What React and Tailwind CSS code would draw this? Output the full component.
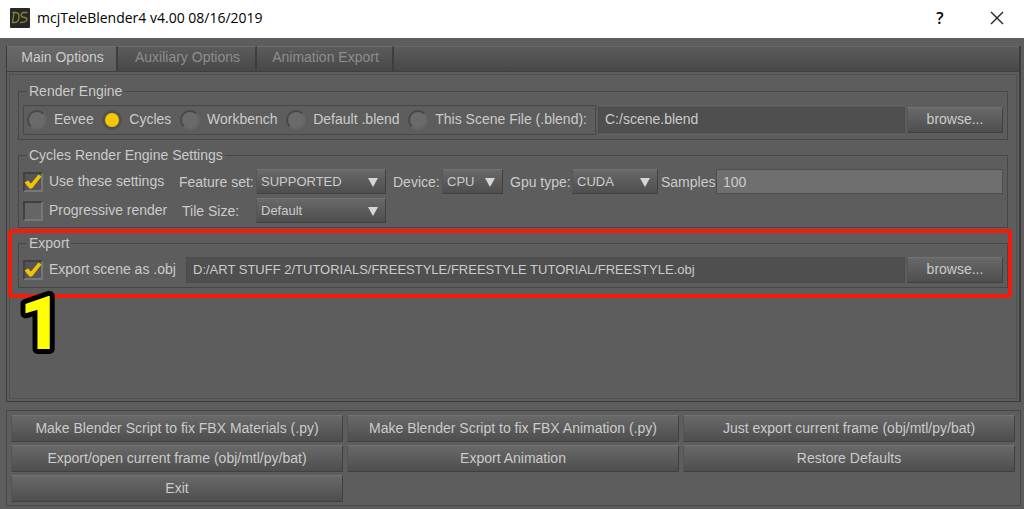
import { useState } from "react";

const tabs = [
  { name: "Main Options", width: "w-[111px]" },
  { name: "Auxiliary Options", width: "w-[139px]" },
  { name: "Animation Export", width: "w-[137px]" },
];

const engines = ["Eevee", "Cycles", "Workbench", "Default .blend", "This Scene File (.blend):"];

const actions = [
  "Make Blender Script to fix FBX Materials (.py)",
  "Make Blender Script to fix FBX Animation (.py)",
  "Just export current frame (obj/mtl/py/bat)",
  "Export/open current frame (obj/mtl/py/bat)",
  "Export Animation",
  "Restore Defaults",
  "Exit",
];

const raised =
  "border border-t-[#727272] border-l-[#555555] border-r-[#414141] border-b-[#414141] bg-linear-to-b from-[#696969] to-[#4e4e4e]";

function Group({ title, children }) {
  return (
    <fieldset className="min-w-0 border border-[#474747] px-1 pb-1">
      <legend className="ml-1 h-5 px-0.5 leading-5">{title}</legend>
      <div className="pt-1">{children}</div>
    </fieldset>
  );
}

function Check({ label, defaultChecked, className }) {
  return (
    <label className={`flex shrink-0 items-center gap-1.5 ${className}`}>
      <span className="relative size-5">
        <input
          type="checkbox"
          defaultChecked={defaultChecked}
          className="peer block size-5 appearance-none border-2 border-t-[#404040] border-l-[#404040] border-r-[#777777] border-b-[#777777] bg-[#656565] checked:bg-[#555555]"
        />
        <svg
          viewBox="0 0 20 20"
          className="pointer-events-none absolute inset-0 hidden size-5 peer-checked:block"
        >
          <path d="M1.500 10.500L5 8.500L8 11.500L15.500 2.500L18.500 4.500L9 16.500H6.500Z" fill="#f3c300" />
        </svg>
      </span>
      <span className="pb-0.5">{label}</span>
    </label>
  );
}

function Select({ id, value, className }) {
  return (
    <div className={`relative shrink-0 ${className}`}>
      <select id={id} className={`block h-[25px] w-full appearance-none pl-1 text-[13px] leading-5 ${raised}`}>
        <option>{value}</option>
      </select>
      <svg viewBox="0 0 10 9" className="pointer-events-none absolute top-[9px] right-2 h-[9px] w-[10px]">
        <path d="M0 0H10L5 9Z" fill="#d6d6d6" />
      </svg>
    </div>
  );
}

function PathRow({ label, value, className = "" }) {
  return (
    <>
      <input
        type="text"
        aria-label={label}
        defaultValue={value}
        className={`h-[26px] min-w-0 flex-1 border border-[#4b4b4b] bg-[#4f4f4f] px-1.5 pb-0.5 ${className}`}
      />
      <button type="button" className={`ml-0.5 h-[26px] w-24 shrink-0 pb-0.5 ${raised}`}>
        browse...
      </button>
    </>
  );
}

export default function App() {
  const [tab, setTab] = useState("Main Options");

  return (
    <div className="flex min-h-screen flex-col bg-[#5d5d5d] font-['Liberation_Sans',Arial,sans-serif] text-sm text-[#cbcbcb]">
      <header className="flex h-[38px] items-center bg-white pr-5 pb-0.5 pl-2.5 text-black">
        <svg viewBox="0 0 20 20" className="size-5">
          <rect width="20" height="20" rx="1" fill="#25272b" />
          <path
            d="M2.500 4.500H5.500Q9.500 4.500 9 9.500Q8.500 14.500 4.500 14.500H2.500L4 5M17.500 4.500H13.500Q10.500 5 11.500 8Q12 9.500 15 9.500Q17.500 10 16.500 12.500Q15.500 14.500 10 14.500"
            fill="none"
            stroke="#8b8127"
            strokeWidth="1.4"
          />
        </svg>
        <h1 className="ml-[7px] flex-1 font-['Open_Sans',sans-serif] text-sm">
          mcjTeleBlender4 v4.00 08/16/2019
        </h1>
        <button type="button" aria-label="Help" className="w-5 font-['Open_Sans',sans-serif] text-base font-semibold">
          ?
        </button>
        <button type="button" aria-label="Close" className="ml-10">
          <svg viewBox="0 0 14 14" className="size-3.5">
            <path d="M1 1L13 13M13 1L1 13" stroke="#222" strokeWidth="1.4" />
          </svg>
        </button>
      </header>

      <main className="flex flex-1 flex-col gap-2 pt-2 pr-[3px] pb-[3px] pl-1.5">
        <section className="flex flex-1 flex-col border-r-2 border-b border-l border-[#3c3c3c]">
          <div role="tablist" className="flex h-[26px] border-b border-[#404040]">
            {tabs.map((t) => (
              <button
                key={t.name}
                type="button"
                role="tab"
                aria-selected={tab === t.name}
                onClick={() => setTab(t.name)}
                className={`border-t border-t-[#6e6e6e] border-r-2 border-r-[#3e3e3e] pb-1 pl-0.5 ${t.width} ${
                  tab === t.name
                    ? "bg-linear-to-b from-[#686868] to-[#5d5d5d]"
                    : "bg-linear-to-b from-[#5b5b5b] to-[#484848] text-[#8d8d8d]"
                }`}
              >
                {t.name}
              </button>
            ))}
            <div className="flex-1 border-t border-[#686868] bg-linear-to-b from-[#5b5b5b] to-[#484848]" />
          </div>

          <div className="m-0.5 flex flex-1 flex-col gap-[5px] border border-[#505050] px-2 pt-1.5">
            <Group title="Render Engine">
              <div className="flex items-center">
                <div className="mr-0.5 flex h-[30px] w-[573px] shrink-0 items-center justify-between border border-[#474747] pr-2 pl-[3px]">
                  {engines.map((engine) => (
                    <label key={engine} className="flex items-center gap-[7px]">
                      <input
                        type="radio"
                        name="engine"
                        defaultChecked={engine === "Cycles"}
                        className="size-5 appearance-none rounded-full border-2 border-t-[#494949] border-l-[#494949] border-r-[#656565] border-b-[#656565] bg-[#6a6a6a] checked:border-3 checked:border-[#505050] checked:bg-[#f6c700]"
                      />
                      <span className="pb-0.5">{engine}</span>
                    </label>
                  ))}
                </div>
                <PathRow label="Scene file" value="C:/scene.blend" />
              </div>
            </Group>

            <Group title="Cycles Render Engine Settings">
              <div className="flex flex-col gap-1">
                <div className="flex items-center">
                  <Check label="Use these settings" defaultChecked className="w-[156px]" />
                  <label htmlFor="feature" className="w-[77px] shrink-0">
                    Feature set:
                  </label>
                  <Select id="feature" value="SUPPORTED" className="w-[130px]" />
                  <label htmlFor="device" className="w-14 shrink-0 pl-[7px]">
                    Device:
                  </label>
                  <Select id="device" value="CPU" className="w-[61px]" />
                  <label htmlFor="gpu" className="w-[69px] shrink-0 pl-[7px]">
                    Gpu type:
                  </label>
                  <Select id="gpu" value="CUDA" className="w-[86px]" />
                  <label htmlFor="samples" className="w-[58px] shrink-0 pl-[3px]">
                    Samples
                  </label>
                  <input
                    id="samples"
                    type="text"
                    defaultValue="100"
                    className="h-[25px] min-w-0 flex-1 border border-[#4e4e4e] bg-[#6f6f6f] px-1.5"
                  />
                </div>
                <div className="flex items-center">
                  <Check label="Progressive render" className="w-[159px]" />
                  <label htmlFor="tile" className="w-[74px] shrink-0">
                    Tile Size:
                  </label>
                  <Select id="tile" value="Default" className="w-[130px]" />
                </div>
              </div>
            </Group>

            <div className="relative">
              <Group title="Export">
                <div className="flex items-center">
                  <Check label="Export scene as .obj" defaultChecked className="w-[163px]" />
                  <PathRow
                    label="Export path"
                    value="D:/ART STUFF 2/TUTORIALS/FREESTYLE/FREESTYLE TUTORIAL/FREESTYLE.obj"
                    className="text-[13px]"
                  />
                </div>
              </Group>
              <div className="pointer-events-none absolute -top-1 -right-1 -bottom-2.5 -left-2.5 rounded-sm border-4 border-[#f31b0c]" />
              <svg
                viewBox="0 0 40 70"
                className="pointer-events-none absolute top-14 left-[3px] h-[70px] w-10 overflow-visible"
              >
                <text
                  x="20"
                  y="60"
                  textAnchor="middle"
                  paintOrder="stroke"
                  stroke="#000"
                  strokeWidth="10"
                  strokeLinejoin="round"
                  fill="#ff0"
                  className="font-[Roboto,sans-serif] text-[74px] font-black"
                >
                  1
                </text>
              </svg>
            </div>
          </div>
        </section>

        <section className="grid grid-cols-3 gap-x-1 gap-y-[3px] border border-[#474747] pt-1 pr-[5px] pb-[3px] pl-1">
          {actions.map((action) => (
            <button key={action} type="button" className={`h-[27px] pb-0.5 ${raised}`}>
              {action}
            </button>
          ))}
        </section>
      </main>
    </div>
  );
}
